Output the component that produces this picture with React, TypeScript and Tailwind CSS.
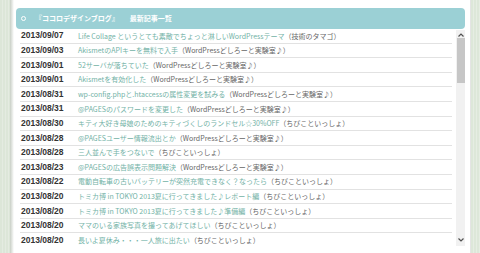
import React from 'react';

interface Post {
  date: string;
  title: string;
  blog: string;
}

const lab = '（WordPressどしろーと実験室♪）';
const chibi = '（ちびこといっしょ）';

const posts: Post[] = [
  { date: '2013/09/07', title: 'Life Collage というとても素敵でちょっと淋しいWordPressテーマ', blog: '（技術のタマゴ）' },
  { date: '2013/09/03', title: 'AkismetのAPIキーを無料で入手', blog: lab },
  { date: '2013/09/01', title: '52サーバが落ちていた', blog: lab },
  { date: '2013/09/01', title: 'Akismetを有効化した', blog: lab },
  { date: '2013/08/31', title: 'wp-config.phpと.htaccessの属性変更を試みる', blog: lab },
  { date: '2013/08/31', title: '@PAGESのパスワードを変更した', blog: lab },
  { date: '2013/08/30', title: 'キティ大好き母娘のためのキティづくしのランドセル☆30%OFF', blog: chibi },
  { date: '2013/08/28', title: '@PAGESユーザー情報流出とか', blog: lab },
  { date: '2013/08/28', title: '三人並んで手をつないで', blog: chibi },
  { date: '2013/08/23', title: '@PAGESの広告誤表示問題解決', blog: lab },
  { date: '2013/08/22', title: '電動自転車の古いバッテリーが突然充電できなく？なったら', blog: chibi },
  { date: '2013/08/20', title: 'トミカ博 in TOKYO 2013夏に行ってきました♪レポート編', blog: chibi },
  { date: '2013/08/20', title: 'トミカ博 in TOKYO 2013夏に行ってきました♪準備編', blog: chibi },
  { date: '2013/08/20', title: 'ママのいる家族写真を撮ってあげてほしい', blog: chibi },
  { date: '2013/08/20', title: '長いよ夏休み・・・一人旅に出たい', blog: chibi },
];

export default function App() {
  return (
    <div className="w-[480px] h-[253px] flex overflow-hidden bg-white font-['Noto_Sans_CJK_JP',sans-serif]">
      {/* 左の背景 */}
      <div className="w-[10px] bg-[repeating-linear-gradient(90deg,#dce6d8_0px,#dce6d8_2px,#e4ebe1_2px,#e4ebe1_3px)]" />
      <div className="w-[4px] bg-gradient-to-r from-[#c9cfc6] to-white" />

      {/* メイン */}
      <div className="w-[456px] pt-[8px] pl-[2px] pr-[5px] flex flex-col">
        <div className="h-[21px] rounded-[4px] bg-[#9bd0d5] flex items-center pl-[5px] text-white text-[7px] font-bold leading-none">
          <span className="w-[5px] h-[5px] rounded-full border border-white" />
          <span className="ml-[9px]">『ココロデザインブログ』</span>
          <span className="ml-[11px]">最新記事一覧</span>
        </div>

        <div className="h-[217px] flex">
          <div className="w-[440px] overflow-hidden">
            {posts.map((p, i) => (
              <div
                key={i}
                className="h-[14.6px] mx-[4px] border-b border-[#e2e2e2] flex items-center whitespace-nowrap"
              >
                <span className="w-[58px] pl-[1px] text-[8.5px] font-bold text-[#333] font-['Liberation_Sans',sans-serif]">
                  {p.date}
                </span>
                <span className="text-[7px] text-[#72b2a6]">{p.title}</span>
                <span className="text-[7px] text-[#666]">{p.blog}</span>
              </div>
            ))}
          </div>

          {/* スクロールバー */}
          <div className="w-[9px] mt-[1px] bg-[#f1f1f1] flex flex-col items-center">
            <svg width="6" height="4" viewBox="0 0 6 4" className="mt-[3px]">
              <path d="M0.5 3.5 L3 1 L5.5 3.5" fill="none" stroke="#505050" strokeWidth="1.2" />
            </svg>
            <div className="w-[8px] h-[45px] mt-[1px] bg-[#c6c6c6]" />
            <div className="flex-1" />
            <svg width="6" height="4" viewBox="0 0 6 4" className="mb-[4px]">
              <path d="M0.5 0.5 L3 3 L5.5 0.5" fill="none" stroke="#505050" strokeWidth="1.2" />
            </svg>
          </div>
        </div>
      </div>

      {/* 右の背景 */}
      <div className="w-[1px] bg-[#e4e4e4]" />
      <div className="w-[9px] bg-[repeating-linear-gradient(90deg,#dde7d9_0px,#dde7d9_2px,#e6ede3_2px,#e6ede3_3px)]" />
    </div>
  );
}
